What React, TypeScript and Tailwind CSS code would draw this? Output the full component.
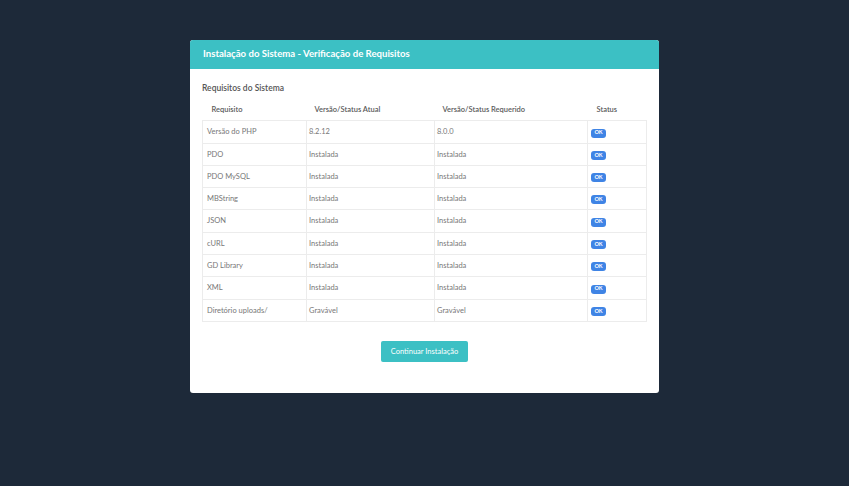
const rows: [string, string, string][] = [
  ["Versão do PHP", "8.2.12", "8.0.0"],
  ["PDO", "Instalada", "Instalada"],
  ["PDO MySQL", "Instalada", "Instalada"],
  ["MBString", "Instalada", "Instalada"],
  ["JSON", "Instalada", "Instalada"],
  ["cURL", "Instalada", "Instalada"],
  ["GD Library", "Instalada", "Instalada"],
  ["XML", "Instalada", "Instalada"],
  ["Diretório uploads/", "Gravável", "Gravável"],
];

export default function App() {
  return (
    <div
      className="w-full min-h-[486px] bg-[#1d2939] flex justify-center pt-[40px]"
      style={{ fontFamily: "Lato, 'Open Sans', sans-serif" }}
    >
      <div className="w-[469px] h-[353px] bg-white rounded-[3px] overflow-hidden self-start">
        <div className="h-[29px] bg-[#3cc0c4] flex items-center px-[13px]">
          <h1 className="text-[9.6px] font-bold text-white">
            Instalação do Sistema - Verificação de Requisitos
          </h1>
        </div>
        <div className="px-[12px] pt-[13px]">
          <h2 className="text-[8.5px] font-semibold text-[#555]">Requisitos do Sistema</h2>
          <table className="w-full mt-[4px] border-collapse text-[7.5px] text-[#777]">
            <thead>
              <tr className="h-[22px] text-[#5a5a5a]">
                <th className="w-[104px] text-left font-semibold pl-[9px]">Requisito</th>
                <th className="w-[128px] text-left font-semibold pl-[8px]">Versão/Status Atual</th>
                <th className="w-[153px] text-left font-semibold pl-[8px]">Versão/Status Requerido</th>
                <th className="text-left font-semibold pl-[9px]">Status</th>
              </tr>
            </thead>
            <tbody>
              {rows.map(([name, cur, req]) => (
                <tr key={name} className="h-[22.3px]">
                  <td className="border border-[#ececec] pl-[4px]">{name}</td>
                  <td className="border border-[#ececec] pl-[2px]">{cur}</td>
                  <td className="border border-[#ececec] pl-[2px]">{req}</td>
                  <td className="border border-[#ececec] pl-[3px]">
                    <span className="inline-flex items-center justify-center w-[15px] h-[9px] rounded-[3px] bg-[#3f84e5] text-white text-[5.5px] font-bold leading-none">
                      OK
                    </span>
                  </td>
                </tr>
              ))}
            </tbody>
          </table>
          <div className="flex justify-center mt-[19px]">
            <button className="w-[87px] h-[21px] rounded-[2px] bg-[#3cc0c4] text-white text-[7.5px]">
              Continuar Instalação
            </button>
          </div>
        </div>
      </div>
    </div>
  );
}
